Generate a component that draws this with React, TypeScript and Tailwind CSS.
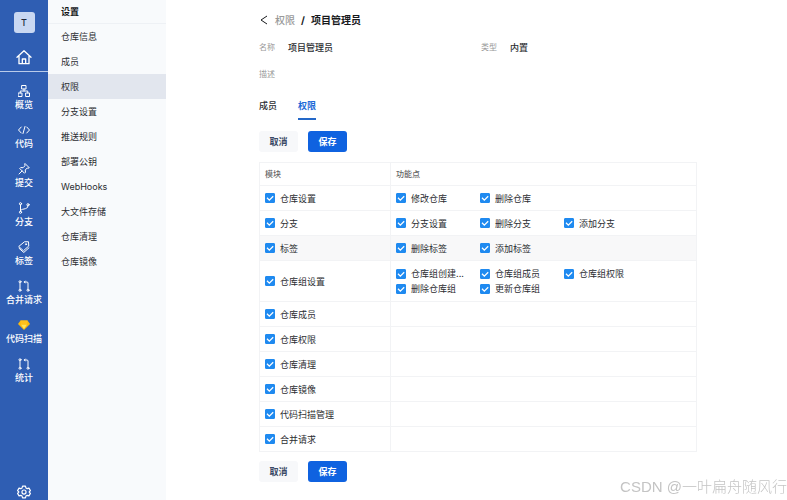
import type { ReactNode } from "react";

const modules: { name: string; features: string[]; highlighted?: boolean }[] = [
  { name: "仓库设置", features: ["修改仓库", "删除仓库"] },
  { name: "分支", features: ["分支设置", "删除分支", "添加分支"] },
  { name: "标签", features: ["删除标签", "添加标签"], highlighted: true },
  {
    name: "仓库组设置",
    features: ["仓库组创建...", "仓库组成员", "仓库组权限", "删除仓库组", "更新仓库组"],
  },
  { name: "仓库成员", features: [] },
  { name: "仓库权限", features: [] },
  { name: "仓库清理", features: [] },
  { name: "仓库镜像", features: [] },
  { name: "代码扫描管理", features: [] },
  { name: "合并请求", features: [] },
];

const settings = [
  "仓库信息",
  "成员",
  "权限",
  "分支设置",
  "推送规则",
  "部署公钥",
  "WebHooks",
  "大文件存储",
  "仓库清理",
  "仓库镜像",
];

function Icon({ children, className = "size-3" }: { children: ReactNode; className?: string }) {
  return (
    <svg
      viewBox="0 0 24 24"
      className={`shrink-0 ${className}`}
      fill="none"
      stroke="currentColor"
      strokeWidth="2"
      strokeLinecap="round"
      strokeLinejoin="round"
      aria-hidden="true"
    >
      {children}
    </svg>
  );
}

const OverviewIcon = () => (
  <Icon>
    <rect x="8" y="1" width="8" height="7" />
    <rect x="1" y="16" width="7" height="7" />
    <rect x="16" y="16" width="7" height="7" />
    <path d="M12 8v4M4.500 16v-4h15v4" />
  </Icon>
);

const CodeIcon = () => (
  <Icon>
    <path d="M6.500 6 1 12l5.500 6M17.500 6 23 12l-5.500 6M14 5l-4 14" />
  </Icon>
);

const PinIcon = () => (
  <Icon>
    <path d="M14.500 1.500 22.500 9.500l-2.500 1-1.500-.5-4 4 .5 4.500-2 2L3.500 11l2-2 4.500.5 4-4-.5-1.500zM8 16l-6 6" />
  </Icon>
);

const BranchIcon = () => (
  <Icon>
    <circle cx="5" cy="3.500" r="2.200" />
    <circle cx="5" cy="20.500" r="2.200" />
    <circle cx="20" cy="5.500" r="2.200" />
    <path d="M5 5.500v13M20 7.500c0 5-4 5.500-8 6.500-4 .8-7 1.500-7 4" />
  </Icon>
);

const TagIcon = () => (
  <Icon>
    <path d="M2 10.500 13 1.500h8l.5 8.500-10 9zM2 14.500l9.500 8.500L22 13.500" />
    <circle cx="16" cy="6.500" r="1.200" />
  </Icon>
);

const MergeIcon = () => (
  <Icon>
    <circle cx="4" cy="3.500" r="2" />
    <circle cx="4" cy="20.500" r="2" />
    <circle cx="20" cy="20.500" r="2" />
    <path d="M4 6v12M12.500 4H18a2 2 0 0 1 2 2v12M14.500 2l-2 2 2 2" />
  </Icon>
);

const GemIcon = () => (
  <svg viewBox="0 0 24 24" className="size-3 shrink-0" aria-hidden="true">
    <path d="M5 3h14l5 7-12 12L0 10z" fill="#fbb80f" />
    <path d="M6 11h12l-6 9z" fill="#ffe35a" />
    <path d="M5 3h14l-1 8H6z" fill="#ffc01c" />
  </svg>
);

const navigation = [
  { label: "概览", icon: <OverviewIcon /> },
  { label: "代码", icon: <CodeIcon /> },
  { label: "提交", icon: <PinIcon /> },
  { label: "分支", icon: <BranchIcon /> },
  { label: "标签", icon: <TagIcon /> },
  { label: "合并请求", icon: <MergeIcon /> },
  { label: "代码扫描", icon: <GemIcon /> },
  { label: "统计", icon: <MergeIcon /> },
];

function Check({ label }: { label: string }) {
  return (
    <label className="flex h-[15px] items-center gap-[5px] whitespace-nowrap">
      <span className="grid size-[10px] shrink-0 place-items-center">
        <input
          type="checkbox"
          defaultChecked
          className="peer col-start-1 row-start-1 size-[10px] appearance-none rounded-[1px] border border-gray-300 bg-white checked:border-[#1f8af0] checked:bg-[#1f8af0]"
        />
        <svg
          viewBox="0 0 10 10"
          className="pointer-events-none invisible col-start-1 row-start-1 size-[10px] peer-checked:visible"
          fill="none"
          stroke="white"
          strokeWidth="1.300"
          aria-hidden="true"
        >
          <path d="M2 4.800l2.300 2.300L8.200 3.300" />
        </svg>
      </span>
      {label}
    </label>
  );
}

function Actions() {
  return (
    <div className="flex gap-[10px] font-semibold">
      <button type="button" className="h-[21px] w-[39px] rounded-[3px] bg-[#f7f8fa] text-[#3b4a66]">
        取消
      </button>
      <button type="button" className="h-[21px] w-[39px] rounded-[3px] bg-[#0f62e0] text-white">
        保存
      </button>
    </div>
  );
}

export default function App() {
  return (
    <div className="flex min-h-screen bg-white font-['Inter','Noto_Sans_CJK_SC',sans-serif] text-[9px] leading-[13px] text-[#2b2d31]">
      <nav className="flex w-12 shrink-0 flex-col items-center bg-[#2f5eb3] font-medium text-white">
        <a
          href="#team"
          className="mt-3 flex size-[21px] items-center justify-center rounded-[3px] bg-[#c9d8f2] text-[#20283a]"
        >
          T
        </a>
        <a href="#home" aria-label="首页" className="mt-4 flex h-[23px] w-full justify-center border-b border-[#b9cbea]">
          <Icon className="size-4">
            <path d="M1.500 12.500 12 2.500l10.500 10M4.500 10.500V22h15V10.500M9.500 22v-7h5v7" />
          </Icon>
        </a>
        <ul className="mt-3">
          {navigation.map((item) => (
            <li key={item.label}>
              <a href="#nav" className="flex h-[39px] flex-col items-center gap-px pt-px whitespace-nowrap">
                {item.icon}
                {item.label}
              </a>
            </li>
          ))}
        </ul>
        <a href="#config" aria-label="配置" className="mt-auto pb-[2px]">
          <Icon className="size-[14px]">
            <path d="M9.500 2h5l.8 3 2.200 1.300 3-.9 2.500 4.300L20.800 12l2.200 2.300-2.500 4.300-3-.9-2.200 1.300-.8 3h-5l-.8-3-2.200-1.300-3 .9L1 14.300 3.200 12 1 9.700l2.500-4.300 3 .9L8.700 5z" />
            <circle cx="12" cy="12" r="3.500" />
          </Icon>
        </a>
      </nav>

      <aside className="w-[118px] shrink-0 bg-[#f8fafc]">
        <h2 className="flex h-6 items-center border-b border-[#eef1f5] px-[13px] font-bold text-[#15171a]">设置</h2>
        <ul>
          {settings.map((item) => (
            <li key={item}>
              <a
                href="#settings"
                className={`flex h-[25px] items-center px-[13px] ${item === "权限" ? "bg-[#e2e6ee]" : ""}`}
              >
                {item}
              </a>
            </li>
          ))}
        </ul>
      </aside>

      <main className="min-w-0 flex-1 pt-3 pr-[90px] pb-[19px] pl-[93px]">
        <h1 className="flex h-4 items-center text-[10px] font-bold text-[#17191c]">
          <a href="#back" aria-label="返回" className="mr-[6px]">
            <svg viewBox="0 0 10 10" className="size-[10px]" fill="none" stroke="currentColor" aria-hidden="true">
              <path d="M8 1 2 5l6 4" />
            </svg>
          </a>
          <a href="#permissions" className="font-medium text-[#999]">
            权限
          </a>
          <span className="mx-[6px]">/</span>
          项目管理员
        </h1>

        <dl className="mt-[13px] grid grid-cols-2 gap-x-[6px] gap-y-[14px]">
          <div className="flex">
            <dt className="w-[29px] text-[8px] text-[#999]">名称</dt>
            <dd className="font-medium">项目管理员</dd>
          </div>
          <div className="flex">
            <dt className="w-[29px] text-[8px] text-[#999]">类型</dt>
            <dd className="font-medium">内置</dd>
          </div>
          <div className="flex">
            <dt className="w-[29px] text-[8px] text-[#999]">描述</dt>
            <dd />
          </div>
        </dl>

        <div role="tablist" className="mt-[17px] flex gap-[21px]">
          <button type="button" role="tab" aria-selected="false" className="h-[22px] pb-2 font-medium">
            成员
          </button>
          <button
            type="button"
            role="tab"
            aria-selected="true"
            className="h-[22px] border-b-2 border-[#2468c8] pb-[6px] font-semibold text-[#1c6ad8]"
          >
            权限
          </button>
        </div>

        <div className="mt-[11px]">
          <Actions />
        </div>

        <table className="mt-[10px] mb-[9px] w-full table-fixed border-separate border-spacing-0 border-t border-l border-[#f2f3f5] text-left">
          <colgroup>
            <col className="w-[30%]" />
            <col />
          </colgroup>
          <thead>
            <tr className="h-[23px] text-[8px] text-[#666]">
              <th className="border-r border-b border-[#f2f3f5] px-[5px] py-0 font-medium">模块</th>
              <th className="border-r border-b border-[#f2f3f5] px-[5px] py-0 font-medium">功能点</th>
            </tr>
          </thead>
          <tbody>
            {modules.map((module) => (
              <tr key={module.name} className={`h-[25px] ${module.highlighted ? "bg-[#f8f8f9]" : ""}`}>
                <td className="border-r border-b border-[#f2f3f5] px-[5px] py-0">
                  <Check label={module.name} />
                </td>
                <td className="border-r border-b border-[#f2f3f5] px-[5px] py-0">
                  {module.features.length > 0 && (
                    <div className={`grid grid-cols-[84px_84px_84px] ${module.features.length > 3 ? "py-[5px]" : ""}`}>
                      {module.features.map((feature) => (
                        <Check key={feature} label={feature} />
                      ))}
                    </div>
                  )}
                </td>
              </tr>
            ))}
          </tbody>
        </table>

        <Actions />
      </main>

      <p className="pointer-events-none fixed right-0 bottom-0 pb-[3px] font-['Liberation_Sans','Noto_Sans_CJK_SC',sans-serif] text-[15px] leading-5 font-light text-[#c4c4c4]">
        CSDN @一叶扁舟随风行
      </p>
    </div>
  );
}
